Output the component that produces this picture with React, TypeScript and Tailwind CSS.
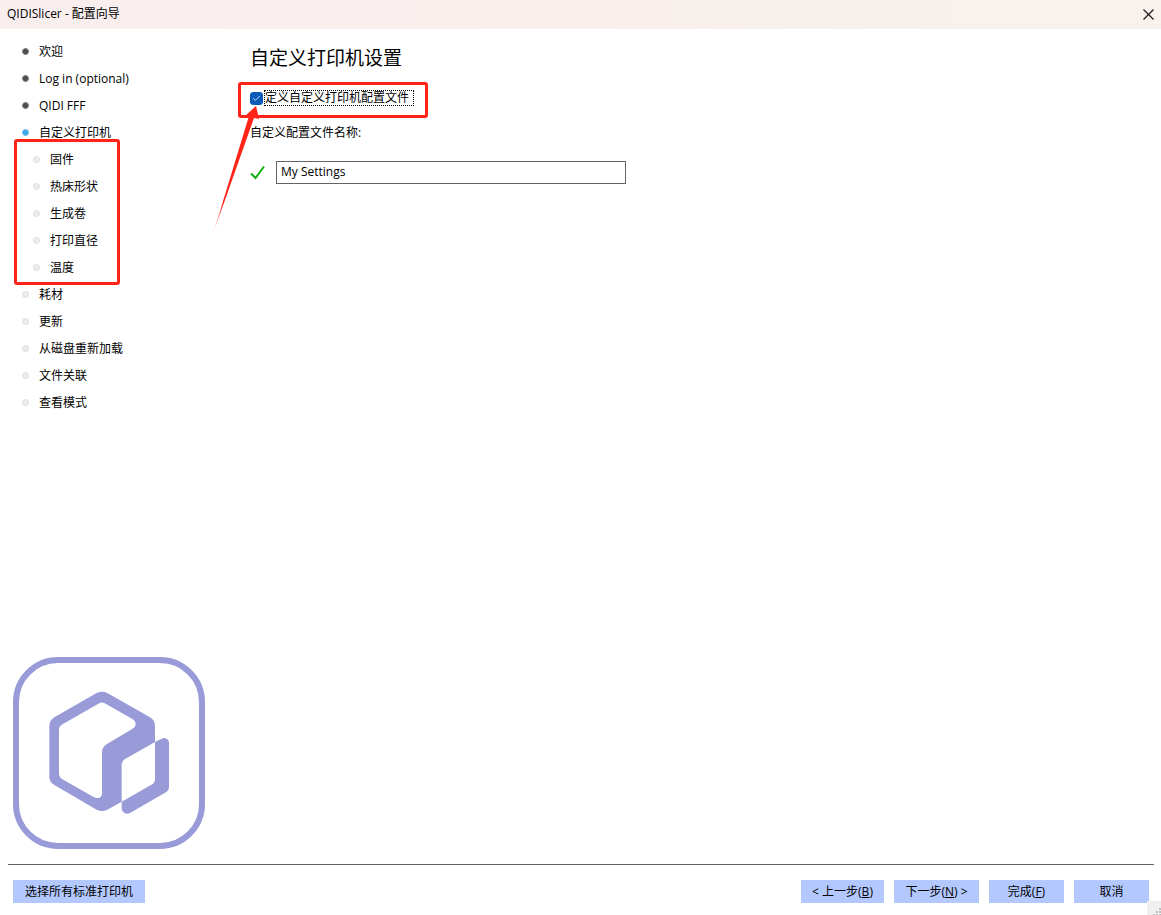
import React from "react";
import clsx from "clsx";
import { Check } from "lucide-react";

type StepState = "done" | "current" | "pending";

function Step({ label, state = "pending" }: { label: string; state?: StepState }) {
  return (
    <div className="flex h-[27px] items-center gap-[10px]">
      <span
        className={clsx(
          "h-[7px] w-[7px] shrink-0 rounded-full border",
          state === "done" && "border-[#808080] bg-[#4c4c4c]",
          state === "current" && "border-[#6cbbe8] bg-[#3fa9e4]",
          state === "pending" && "border-[#dedede] bg-[#ececec]"
        )}
      />
      <span className="whitespace-nowrap">{label}</span>
    </div>
  );
}

function Logo() {
  return (
    <svg viewBox="39 36 576 576" className="h-48 w-48" aria-hidden="true">
      <rect x="48" y="45" width="558" height="558" rx="126" fill="none" stroke="#989bd8" strokeWidth="18" />
      <path
        fill="#989bd8"
        fillRule="evenodd"
        d="M290 144Q306 137 322 144L450 217Q465 226 465 243V291L374 343Q365 349 365 359V470L322 494Q306 502 290 494L163 420Q148 411 148 397V243Q148 226 163 217ZM299 174Q306 171 313 174L397 222Q407 228 407 238Q407 246 398 251L322 296Q306 306 306 322V445Q306 455 298 458Q290 461 282 457L186 402Q177 396 177 388V252Q177 244 185 239Z"
      />
      <path
        fill="#989bd8"
        d="M465 291L485 281Q493 277 500 281Q507 285 507 293V427Q507 436 499 441L390 504Q382 508 373 504Q365 499 365 490V470L458 417Q465 412 465 404Z"
      />
    </svg>
  );
}

function Arrow() {
  return (
    <svg viewBox="0 0 50 132" className="pointer-events-none absolute top-[14px] -left-[37px] h-[132px] w-[50px]" aria-hidden="true">
      <defs>
        <linearGradient id="tail" x1="0" y1="1" x2="0" y2="0">
          <stop offset="0" stopColor="#ff2318" stopOpacity="0.1" />
          <stop offset="0.25" stopColor="#ff2318" />
        </linearGradient>
      </defs>
      <path fill="url(#tail)" d="M43 2L46 15L41 14L0 130L36 12L31 13Z" />
    </svg>
  );
}

function WizardButton({ children, className }: { children: React.ReactNode; className: string }) {
  return (
    <button type="button" className={clsx("h-[23px] whitespace-nowrap bg-[#b3c8ff] hover:bg-[#a2bbfb]", className)}>
      {children}
    </button>
  );
}

const substeps = ["固件", "热床形状", "生成卷", "打印直径", "温度"];
const laterSteps = ["耗材", "更新", "从磁盘重新加载", "文件关联", "查看模式"];

export default function App() {
  return (
    <div className="relative flex min-h-screen flex-col bg-white font-['Open_Sans','Noto_Sans_CJK_SC',sans-serif] text-[12px] leading-4 text-black">
      <header className="flex h-[29px] items-center justify-between bg-linear-to-r from-[#f9eeee] to-[#f8f1ec] pr-[7px] pb-px pl-[7px]">
        <span>QIDISlicer - 配置向导</span>
        <button type="button" aria-label="关闭">
          <svg viewBox="0 0 11 11" className="h-[11px] w-[11px]" fill="none" stroke="#1a1a1a" strokeWidth="1.2">
            <path d="M.5.5l10 10M10.500.5l-10 10" />
          </svg>
        </button>
      </header>

      <div className="flex flex-1">
        <aside className="flex w-[238px] shrink-0 flex-col justify-between pt-[9px] pb-[15px]">
          <ul className="pl-[22px]">
            <li><Step label="欢迎" state="done" /></li>
            <li><Step label="Log in (optional)" state="done" /></li>
            <li><Step label="QIDI FFF" state="done" /></li>
            <li>
              <Step label="自定义打印机" state="current" />
              <div className="relative w-[98px]">
                <ul className="pl-[11px]">
                  {substeps.map((label) => (
                    <li key={label}><Step label={label} /></li>
                  ))}
                </ul>
                <span className="pointer-events-none absolute -top-[7px] right-0 -bottom-1 -left-2 rounded-[3px] border-3 border-[#ff2318]" />
              </div>
            </li>
            {laterSteps.map((label) => (
              <li key={label}><Step label={label} /></li>
            ))}
          </ul>
          <div className="pl-[13px]">
            <Logo />
          </div>
        </aside>

        <main className="flex-1 pt-[15px] pl-3">
          <h1 className="text-[19px] leading-7">自定义打印机设置</h1>

          <div className="relative mt-[18px] flex w-[164px] items-center gap-px">
            <span className="grid h-[13px] w-[13px] shrink-0 place-items-center">
              <input
                id="custom"
                type="checkbox"
                defaultChecked
                className="peer col-start-1 row-start-1 h-[13px] w-[13px] appearance-none rounded-[3px] border border-[#0a5cb8] checked:bg-[#0a5cb8]"
              />
              <Check className="pointer-events-none col-start-1 row-start-1 hidden h-[9px] w-[9px] text-white peer-checked:block" />
            </span>
            <label htmlFor="custom" className="flex-1 whitespace-nowrap border border-dotted border-black leading-[14px]">
              定义自定义打印机配置文件
            </label>
            <span className="pointer-events-none absolute -top-2 -right-[14px] -bottom-3 -left-3 rounded-[3px] border-3 border-[#ff2318]" />
            <Arrow />
          </div>

          <label htmlFor="profile" className="mt-[19px] block">自定义配置文件名称:</label>
          <div className="mt-5 flex items-center gap-[11px] pr-6">
            <svg viewBox="0 0 15 15" className="h-[15px] w-[15px] shrink-0" fill="none" stroke="#0cae0c" strokeWidth="2" aria-hidden="true">
              <path d="M1 8.500L5.500 13L14 1.500" />
            </svg>
            <input
              id="profile"
              type="text"
              defaultValue="My Settings"
              className="h-[23px] w-full max-w-[350px] border border-[#646464] px-1 pb-[3px] outline-none"
            />
          </div>
        </main>
      </div>

      <footer className="mr-[7px] ml-2 flex flex-wrap justify-between gap-[10px] border-t border-[#646464] pt-[15px] pr-[5px] pb-3 pl-[5px]">
        <WizardButton className="w-[132px]">选择所有标准打印机</WizardButton>
        <div className="flex gap-[10px]">
          <WizardButton className="w-[83px]">&lt; 上一步(<u>B</u>)</WizardButton>
          <WizardButton className="w-[85px]">下一步(<u>N</u>) &gt;</WizardButton>
          <WizardButton className="w-[75px]">完成(<u>F</u>)</WizardButton>
          <WizardButton className="w-[75px]">取消</WizardButton>
        </div>
      </footer>

      <svg viewBox="0 0 14 14" className="absolute right-0 bottom-0 h-[14px] w-[14px]" aria-hidden="true">
        <path fill="#f0f0f0" d="M0 0h14v14H0z" />
        <path fill="#bdbdbd" d="M12 7h2v2h-2zM9 10h2v2H9zM12 10h2v2h-2zM6 13h2v1H6zM9 13h2v1H9zM12 13h2v1h-2z" />
      </svg>
    </div>
  );
}
